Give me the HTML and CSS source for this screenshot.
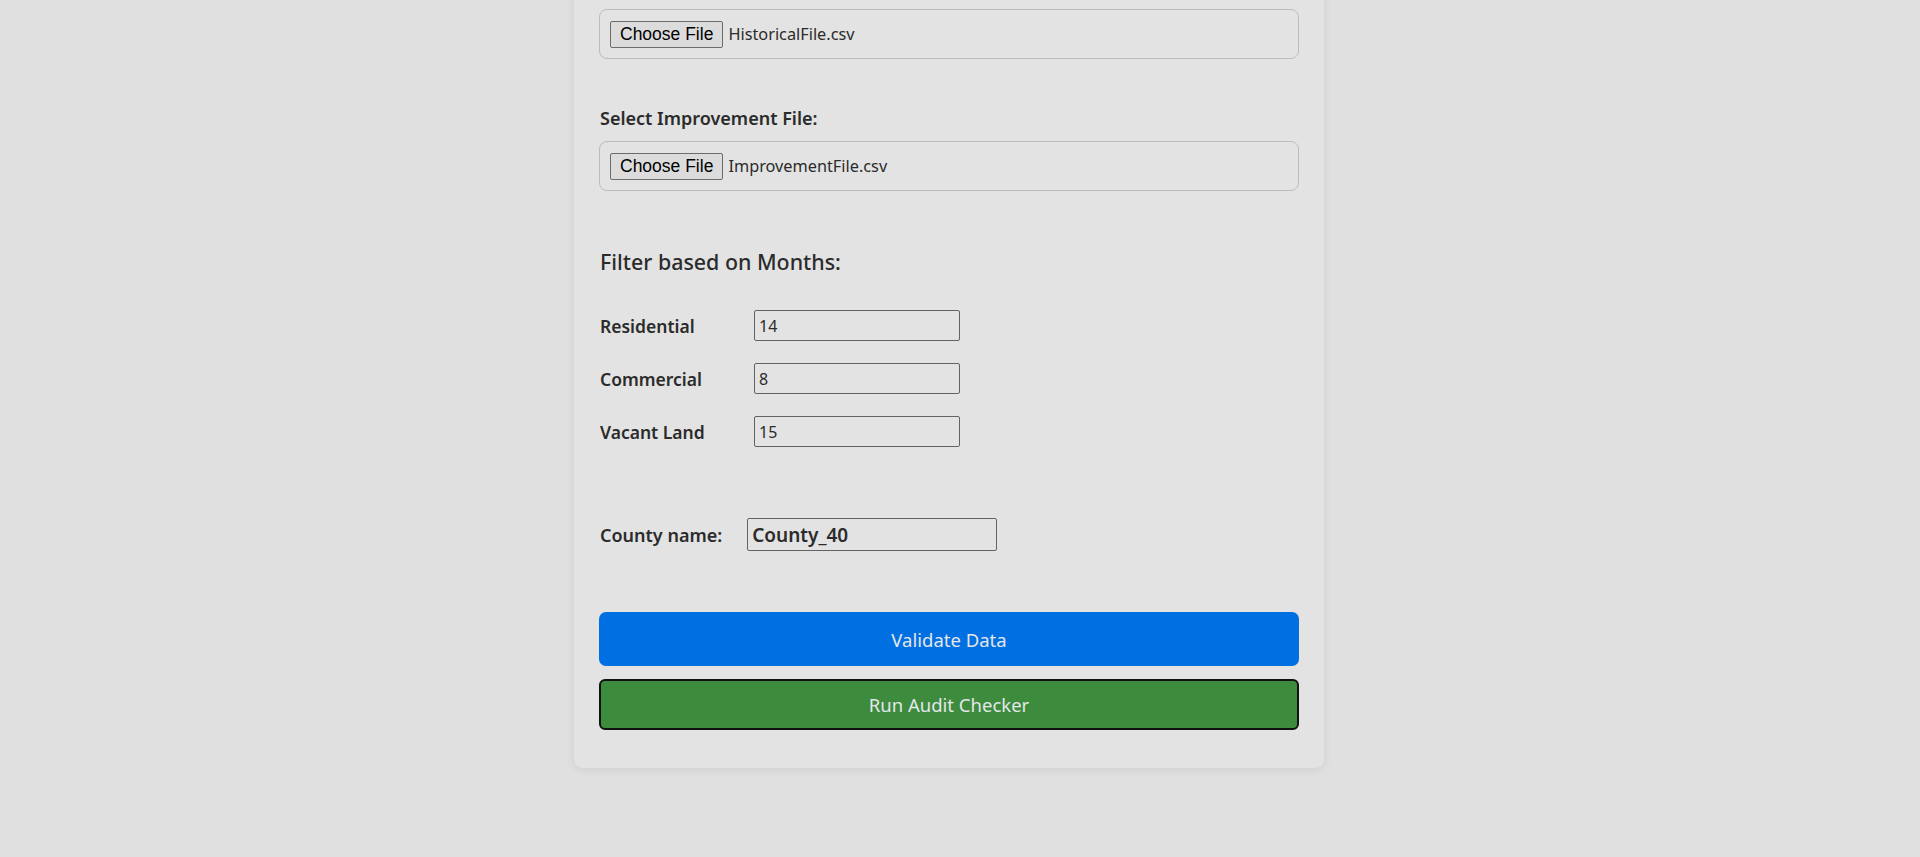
FILE: index.html
```html
<!DOCTYPE html>
<html lang="en">
<head>
<meta charset="utf-8">
<title>Audit Checker</title>
<link rel="stylesheet" href="styles.css">
</head>
<body>
<div class="page">
  <form class="card">
    <label class="field-label">Select Historical File:</label>
    <div class="file-box">
      <span class="file-btn">Choose File</span>
      <span class="file-name">HistoricalFile.csv</span>
    </div>

    <label class="field-label second">Select Improvement File:</label>
    <div class="file-box">
      <span class="file-btn">Choose File</span>
      <span class="file-name">ImprovementFile.csv</span>
    </div>

    <h3 class="section-title">Filter based on Months:</h3>

    <div class="months">
      <div class="month-row">
        <label class="row-label">Residential</label>
        <input class="num-input" type="text" value="14">
      </div>
      <div class="month-row">
        <label class="row-label">Commercial</label>
        <input class="num-input" type="text" value="8">
      </div>
      <div class="month-row">
        <label class="row-label">Vacant Land</label>
        <input class="num-input" type="text" value="15">
      </div>
    </div>

    <div class="county-row">
      <label class="county-label">County name:</label>
      <input class="county-input" type="text" value="County_40">
    </div>

    <div class="actions">
      <button type="button" class="btn btn-validate">Validate Data</button>
      <button type="button" class="btn btn-run">Run Audit Checker</button>
    </div>
  </form>
</div>
</body>
</html>
```

FILE: styles.css
```css
html, body {
  margin: 0;
  padding: 0;
  background: #e0e0e0;
  height: 100%;
  overflow: hidden;
}

body {
  font-family: "Noto Sans", "Open Sans", sans-serif;
  color: #2b2b2b;
}

.page {
  display: flex;
  justify-content: center;
  padding-right: 22px;
}

.card {
  width: 750px;
  box-sizing: border-box;
  margin-top: -50px;
  padding: 25px 25px 25px 25px;
  background: #e3e3e3;
  border-radius: 9px;
  box-shadow: 0 2px 10px rgba(0, 0, 0, 0.08);
  display: flex;
  flex-direction: column;
}

.field-label {
  display: block;
  padding-left: 1px;
  font-size: 18px;
  font-weight: 600;
  line-height: 22px;
  margin-bottom: 12px;
}

.field-label.second {
  margin-top: 48px;
}

.file-box {
  height: 50px;
  box-sizing: border-box;
  border: 1px solid #bcbcbc;
  border-radius: 8px;
  padding: 0 10px;
  display: flex;
  align-items: center;
}

.file-btn {
  font-family: "Liberation Sans", Arial, sans-serif;
  font-size: 17.5px;
  color: #000;
  height: 27px;
  box-sizing: border-box;
  padding: 0 9px;
  display: flex;
  align-items: center;
  background: #dcdcdc;
  border: 1px solid #6c6c6c;
  border-radius: 2px;
}

.file-name {
  margin-left: 5px;
  font-size: 16.3px;
  color: #2b2b2b;
}

.section-title {
  margin: 56px 0 0;
  padding-left: 1px;
  font-size: 21.4px;
  font-weight: 500;
  line-height: 30px;
}

.months {
  margin-top: 33px;
  display: flex;
  flex-direction: column;
  gap: 22px;
}

.month-row {
  display: flex;
  align-items: center;
  padding-left: 1px;
}

.row-label {
  width: 154px;
  font-size: 17.5px;
  font-weight: 600;
}

.num-input {
  width: 206px;
  height: 31px;
  box-sizing: border-box;
  border: 1px solid #636363;
  border-radius: 2px;
  background: transparent;
  padding: 0 4px;
  font-family: "Noto Sans", "Open Sans", sans-serif;
  font-size: 16px;
  color: #2b2b2b;
  outline: none;
}

.county-row {
  margin-top: 71px;
  display: flex;
  align-items: center;
  padding-left: 1px;
}

.county-label {
  font-size: 18px;
  font-weight: 600;
  margin-right: 25px;
}

.county-input {
  width: 250px;
  height: 33px;
  box-sizing: border-box;
  border: 1px solid #636363;
  border-radius: 2px;
  background: transparent;
  padding: 0 4px;
  font-family: "Noto Sans", "Open Sans", sans-serif;
  font-size: 19px;
  font-weight: 600;
  color: #2b2b2b;
  outline: none;
}

.actions {
  margin-top: 61px;
  margin-bottom: 13px;
  display: flex;
  flex-direction: column;
  gap: 13px;
}

.btn {
  width: 100%;
  font-family: "Noto Sans", "Open Sans", sans-serif;
  font-size: 18.5px;
  color: #e3e6ea;
  cursor: pointer;
}

.btn-validate {
  height: 54px;
  background: #006fe1;
  border: none;
  border-radius: 7px;
}

.btn-run {
  height: 51px;
  background: #3d8b3d;
  border: 2px solid #111;
  border-radius: 6px;
}
```
